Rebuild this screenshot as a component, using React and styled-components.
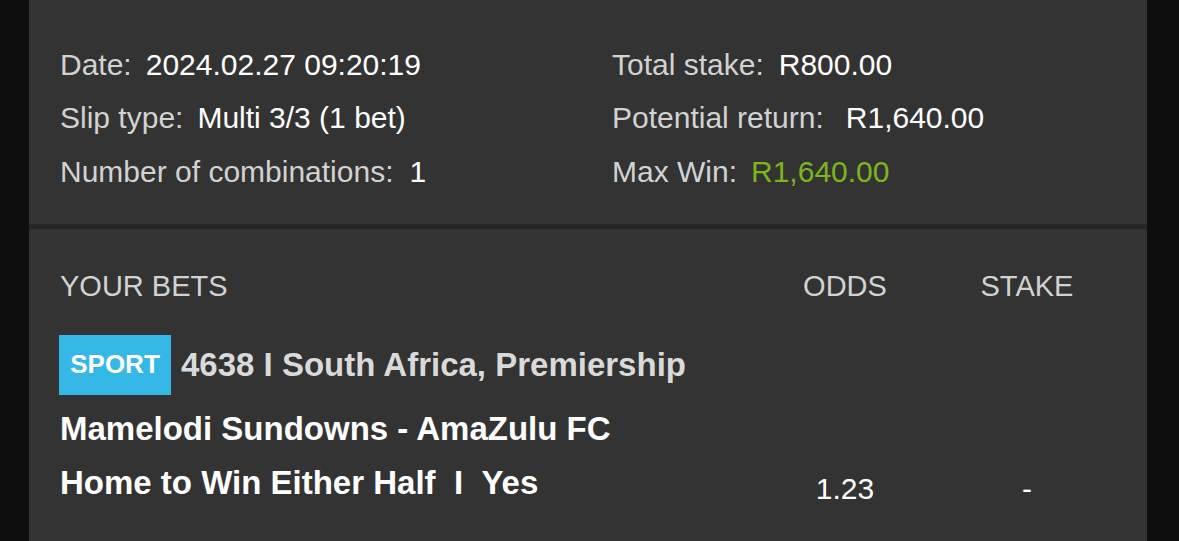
import styled, { createGlobalStyle } from "styled-components";

const GlobalStyle = createGlobalStyle`
  html, body {
    margin: 0;
    padding: 0;
    background-color: #0e0e0e;
  }
  body {
    font-family: "Liberation Sans", Arial, Helvetica, sans-serif;
  }
`;

const Page = styled.div`
  min-height: 100vh;
  padding: 0 32px 0 29px;
  box-sizing: border-box;
  display: flex;
`;

const Slip = styled.div`
  flex: 1;
  background-color: #333333;
  display: flex;
  flex-direction: column;
`;

const Summary = styled.section`
  display: grid;
  grid-template-columns: 552px 1fr;
  padding: 38px 31px 25px 31px;
  border-bottom: 5px solid #252525;
`;

const SummaryColumn = styled.div`
  display: flex;
  flex-direction: column;
`;

const InfoRow = styled.div`
  display: flex;
  align-items: center;
  height: 53.5px;
  font-size: 30px;
  white-space: nowrap;
`;

const Label = styled.span`
  color: #d2d2d2;
  margin-right: ${(p) => p.$gap || 14}px;
`;

const Value = styled.span`
  color: ${(p) => (p.$highlight ? "#7db51d" : "#ffffff")};
`;

const Bets = styled.section`
  padding: 37px 29px 0 31px;
`;

const BetsHeader = styled.div`
  display: grid;
  grid-template-columns: 1fr 182px 182px;
  line-height: 40px;
  font-size: 29px;
  color: #d2d2d2;
`;

const HeaderCell = styled.div`
  text-align: ${(p) => (p.$center ? "center" : "left")};
`;

const EventRow = styled.div`
  display: flex;
  align-items: center;
  margin-top: 29px;
  white-space: nowrap;
`;

const Badge = styled.span`
  display: inline-flex;
  align-items: center;
  justify-content: center;
  height: 60px;
  width: 112px;
  margin-left: -1px;
  background-color: #35b8e6;
  color: #ffffff;
  font-size: 26px;
  font-weight: 700;
`;

const EventName = styled.span`
  margin-left: 10px;
  font-size: 33px;
  font-weight: 700;
  color: #dadada;
`;

const MatchName = styled.div`
  margin-top: 7px;
  line-height: 54px;
  font-size: 33px;
  font-weight: 700;
  color: #ffffff;
  white-space: nowrap;
`;

const MarketRow = styled.div`
  display: grid;
  grid-template-columns: 1fr 182px 182px;
  line-height: 54px;
  white-space: nowrap;
`;

const Market = styled.div`
  font-size: 33px;
  font-weight: 700;
  color: #ffffff;
`;

const Cell = styled.div`
  padding-top: 6px;
  text-align: center;
  font-size: 30px;
  color: #ffffff;
`;

const left = [
  { label: "Date:", value: "2024.02.27 09:20:19" },
  { label: "Slip type:", value: "Multi 3/3 (1 bet)" },
  { label: "Number of combinations:", value: "1", gap: 16 },
];

const right = [
  { label: "Total stake:", value: "R800.00", gap: 15 },
  { label: "Potential return:", value: "R1,640.00", gap: 22 },
  { label: "Max Win:", value: "R1,640.00", highlight: true },
];

const InfoColumn = ({ rows }) => (
  <SummaryColumn>
    {rows.map((r) => (
      <InfoRow key={r.label}>
        <Label $gap={r.gap}>{r.label}</Label>
        <Value $highlight={r.highlight}>{r.value}</Value>
      </InfoRow>
    ))}
  </SummaryColumn>
);

const App = () => {
  return (
    <>
      <GlobalStyle />
      <Page>
        <Slip>
          <Summary>
            <InfoColumn rows={left} />
            <InfoColumn rows={right} />
          </Summary>
          <Bets>
            <BetsHeader>
              <HeaderCell>YOUR BETS</HeaderCell>
              <HeaderCell $center>ODDS</HeaderCell>
              <HeaderCell $center>STAKE</HeaderCell>
            </BetsHeader>
            <EventRow>
              <Badge>SPORT</Badge>
              <EventName>4638 I South Africa, Premiership</EventName>
            </EventRow>
            <MatchName>Mamelodi Sundowns - AmaZulu FC</MatchName>
            <MarketRow>
              <Market>Home to Win Either Half&nbsp;&nbsp;I&nbsp;&nbsp;Yes</Market>
              <Cell>1.23</Cell>
              <Cell>-</Cell>
            </MarketRow>
          </Bets>
        </Slip>
      </Page>
    </>
  );
};

export default App;
